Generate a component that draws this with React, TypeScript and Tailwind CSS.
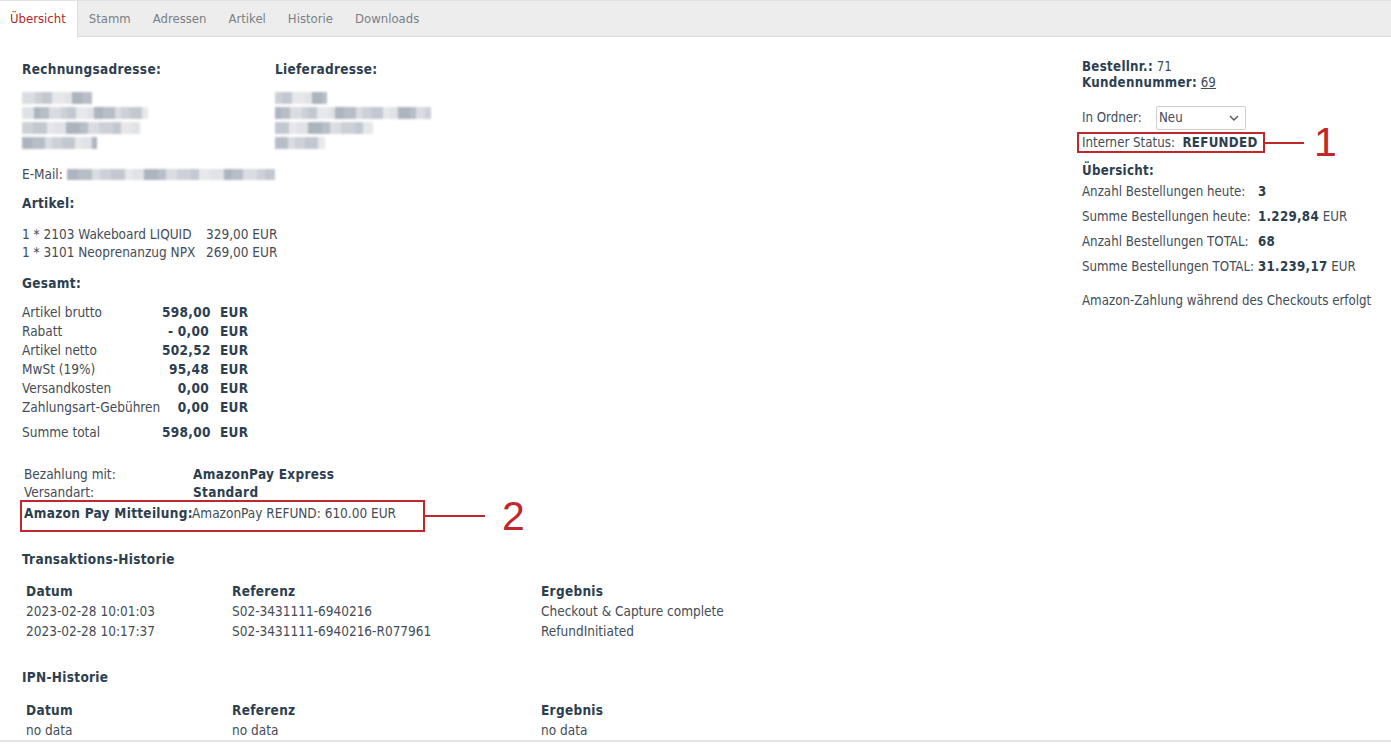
import React from "react";

const tabs = ["Übersicht", "Stamm", "Adressen", "Artikel", "Historie", "Downloads"];

const shades = ["#c3c8d0", "#d9dce1", "#aeb4be", "#e6e8eb", "#cdd1d7", "#b8bec7", "#dfe2e6"];

const B = "font-bold text-[#2d3e50] tracking-[0.3px]";

// pixelated (anonymised) text line
function Pixels({ width, seed, h = 12 }: { width: number; seed: number; h?: number }) {
  const cells = [];
  let x = 0;
  let i = seed;
  while (x < width) {
    const w = Math.min(6 + ((i * 7) % 9), width - x);
    cells.push(
      <span
        key={x}
        className="block h-full"
        style={{ width: w, background: shades[i % shades.length] }}
      />
    );
    x += w;
    i += 3;
  }
  return (
    <div className="flex blur-[0.8px]" style={{ width, height: h }}>
      {cells}
    </div>
  );
}

function Address({ widths, seed }: { widths: number[]; seed: number }) {
  return (
    <div className="flex flex-col gap-[3px]">
      {widths.map((w, i) => (
        <Pixels key={i} width={w} seed={seed + i * 5} />
      ))}
    </div>
  );
}

const totals = [
  ["Artikel brutto", "598,00"],
  ["Rabatt", "- 0,00"],
  ["Artikel netto", "502,52"],
  ["MwSt (19%)", "95,48"],
  ["Versandkosten", "0,00"],
  ["Zahlungsart-Gebühren", "0,00"],
];

const stats = [
  ["Anzahl Bestellungen heute:", "3", ""],
  ["Summe Bestellungen heute:", "1.229,84", " EUR"],
  ["Anzahl Bestellungen TOTAL:", "68", ""],
  ["Summe Bestellungen TOTAL:", "31.239,17", " EUR"],
];

function HistoryTable({ rows }: { rows: string[][] }) {
  return (
    <div className="ml-[4px] mt-[14px]">
      <div className={"grid grid-cols-[206px_309px_1fr] leading-[20px] " + B}>
        <div>Datum</div>
        <div>Referenz</div>
        <div>Ergebnis</div>
      </div>
      {rows.map((r, i) => (
        <div key={i} className="grid grid-cols-[206px_309px_1fr] leading-[20px]">
          <div>{r[0]}</div>
          <div>{r[1]}</div>
          <div>{r[2]}</div>
        </div>
      ))}
    </div>
  );
}

export default function App() {
  return (
    <div className="min-h-screen bg-white text-[13.5px] text-[#444c57] font-['DejaVu_Sans_Condensed','DejaVu_Sans',sans-serif] [font-stretch:condensed]">
      {/* tab bar */}
      <div className="flex h-[37px] text-[13px] bg-[#ededed] border-t border-[#e2e2e2] border-b border-b-[#d9d9d9]">
        {tabs.map((t, i) =>
          i === 0 ? (
            <div
              key={t}
              className="h-[36px] -mb-px bg-white border-r border-[#dcdcdc] pl-[10px] pr-[11px] flex items-center text-[#b3262e]"
            >
              {t}
            </div>
          ) : (
            <div key={t} className="px-[11px] flex items-center text-[#7a7f86]">
              {t}
            </div>
          )
        )}
      </div>

      <div className="flex">
        {/* left column */}
        <div className="flex-1 pl-[22px] pt-[24px]">
          <div className="grid grid-cols-[253px_1fr]">
            <div>
              <div className={"leading-[16px] " + B}>Rechnungsadresse:</div>
              <div className="mt-[15px]">
                <Address widths={[70, 126, 118, 75]} seed={1} />
              </div>
            </div>
            <div>
              <div className={"leading-[16px] " + B}>Lieferadresse:</div>
              <div className="mt-[15px]">
                <Address widths={[52, 156, 98, 50]} seed={4} />
              </div>
            </div>
          </div>

          <div className="mt-[17px] flex items-center leading-[16px]">
            <span>E-Mail:&nbsp;</span>
            <Pixels width={208} seed={2} h={11} />
          </div>

          <div className={"mt-[13px] leading-[16px] " + B}>Artikel:</div>
          <div className="mt-[14px] leading-[18px]">
            <div className="grid grid-cols-[184px_auto]">
              <div>1 * 2103 Wakeboard LIQUID</div>
              <div>329,00 EUR</div>
            </div>
            <div className="grid grid-cols-[184px_auto]">
              <div>1 * 3101 Neoprenanzug NPX</div>
              <div>269,00 EUR</div>
            </div>
          </div>

          <div className={"mt-[14px] leading-[16px] " + B}>Gesamt:</div>
          <div className="mt-[12px] leading-[19px]">
            {totals.map(([l, v]) => (
              <div key={l} className="flex">
                <div className="w-[140px]">{l}</div>
                <div className={"w-[47px] text-right " + B}>{v}</div>
                <div className={"ml-[11px] " + B}>EUR</div>
              </div>
            ))}
            <div className="flex mt-[6px]">
              <div className="w-[140px]">Summe total</div>
              <div className={"w-[47px] text-right " + B}>598,00</div>
              <div className={"ml-[11px] " + B}>EUR</div>
            </div>
          </div>

          <div className="mt-[23px] leading-[18px]">
            <div className="flex pl-[2px]">
              <div className="w-[169px]">Bezahlung mit:</div>
              <div className={B}>AmazonPay Express</div>
            </div>
            <div className="flex pl-[2px]">
              <div className="w-[169px]">Versandart:</div>
              <div className={B}>Standard</div>
            </div>
            <div className="flex items-center -ml-[2px] -mt-px">
              <div className="flex w-[405px] h-[32px] border-2 border-[#c0272d] pl-[2px] pt-[2px]">
                <div className={"w-[168px] whitespace-nowrap tracking-[0.1px] " + B}>Amazon Pay Mitteilung:</div>
                <div>AmazonPay REFUND: 610.00 EUR</div>
              </div>
              <div className="w-[60px] h-[2px] bg-[#c0272d]" />
              <div className="ml-[17px] h-[32px] flex items-center text-[41px] leading-none text-[#c0272d] font-['Liberation_Sans',sans-serif]">
                2
              </div>
            </div>
          </div>

          <div className={"mt-[19px] leading-[16px] " + B}>Transaktions-Historie</div>
          <HistoryTable
            rows={[
              ["2023-02-28 10:01:03", "S02-3431111-6940216", "Checkout & Capture complete"],
              ["2023-02-28 10:17:37", "S02-3431111-6940216-R077961", "RefundInitiated"],
            ]}
          />

          <div className={"mt-[28px] leading-[16px] " + B}>IPN-Historie</div>
          <div className="pt-[1px]">
            <HistoryTable rows={[["no data", "no data", "no data"]]} />
          </div>
        </div>

        {/* right column */}
        <div className="w-[309px] shrink-0 pt-[22px] text-[13.2px]">
          <div className="leading-[16px]">
            <div>
              <span className={B}>Bestellnr.:</span> 71
            </div>
            <div>
              <span className={B}>Kundennummer:</span>{" "}
              <span className="underline">69</span>
            </div>
          </div>

          <div className="mt-[15px] flex items-center">
            <span className="w-[74px]">In Ordner:</span>
            <div className="w-[90px] h-[24px] border border-[#cfcfcf] rounded-[2px] flex items-center justify-between pl-[2px] pr-[6px]">
              <span>Neu</span>
              <svg width="10" height="6" viewBox="0 0 10 6" fill="none" stroke="#555" strokeWidth="1.4">
                <path d="M1 1l4 4 4-4" />
              </svg>
            </div>
          </div>

          <div className="flex items-center -ml-[5px] mt-[2px]">
            <div className="h-[21px] w-[188px] border-2 border-[#c0272d] pl-[3px] flex items-center whitespace-nowrap">
              Interner Status:&nbsp;&nbsp;<span className={B}>REFUNDED</span>
            </div>
            <div className="w-[39px] h-[2px] bg-[#c0272d]" />
            <div className="ml-[10px] h-[21px] flex items-center text-[41px] leading-none text-[#c0272d] font-['Liberation_Sans',sans-serif]">
              1
            </div>
          </div>

          <div className={"mt-[10px] leading-[16px] " + B}>Übersicht:</div>
          <div className="leading-[25px]">
            {stats.map(([l, v, u]) => (
              <div key={l} className="grid grid-cols-[176px_auto] whitespace-nowrap">
                <div>{l}</div>
                <div>
                  <span className={B}>{v}</span>
                  {u}
                </div>
              </div>
            ))}
          </div>
          <div className="mt-[14px] leading-[16px] whitespace-nowrap">
            Amazon-Zahlung während des Checkouts erfolgt
          </div>
        </div>
      </div>

      <div className="border-t-2 border-[#e4e4e4]" />
    </div>
  );
}
